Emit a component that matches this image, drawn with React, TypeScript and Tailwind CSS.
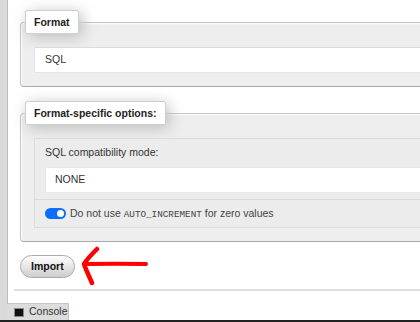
import React from "react";

const Fieldset: React.FC<{ legend: string; children: React.ReactNode; className?: string }> = ({
  legend,
  children,
  className = "",
}) => (
  <fieldset
    className={`w-[470px] rounded-[4px] border border-[#c6c6c6] border-b-[#a9a9a9] bg-[#eeeeee] shadow-[inset_1px_1px_2px_#fff] ${className}`}
  >
    <legend className="ml-[4px] h-[24px] px-[8px] bg-white border border-[#cfcfcf] rounded-[2px] shadow-[3px_3px_15px_#bbb] font-bold text-[10.5px] leading-[22px] text-[#222]">
      {legend}
    </legend>
    {children}
  </fieldset>
);

export default function App() {
  return (
    <div className="w-[420px] h-[322px] overflow-hidden bg-white flex flex-col font-['Liberation_Sans',Arial,sans-serif] text-[#333]">
      <div className="flex flex-1 min-h-0">
        <div className="w-[8px] shrink-0 bg-[#dadada] border-r border-[#bcbcbc]" />

        <main className="pl-[12px] pt-[10px] flex flex-col">
          <Fieldset legend="Format">
            <div className="pt-[13px] pb-[13px] pl-[13px]">
              <div className="h-[26px] w-[440px] bg-white border border-[#e6e6e6] border-t-[#dcdcdc] flex items-center pl-[10px] text-[10.5px] text-[#333]">
                SQL
              </div>
            </div>
          </Fieldset>

          <Fieldset legend="Format-specific options:" className="mt-[14px]">
            <div className="pt-[13px] pb-[13px] pl-[13px]">
              <div className="w-[440px] border border-[#dcdcdc] bg-[#ececec]">
                <div className="px-[10px] pt-[7px] pb-[6px]">
                  <p className="text-[10.5px] leading-[13px] text-[#333]">SQL compatibility mode:</p>
                  <div className="mt-[8px] h-[26px] bg-white border border-[#e8e8e8] flex items-center pl-[9px] text-[10.5px] text-[#333]">
                    NONE
                  </div>
                </div>
                <div className="h-[28px] border-t border-[#dadada] flex items-center pl-[10px] gap-[4px] text-[10.5px] text-[#444]">
                  <span className="w-[21px] h-[11px] rounded-full bg-[#0d6efd] flex items-center justify-end pr-[2px]">
                    <span className="w-[7px] h-[7px] rounded-full bg-white" />
                  </span>
                  <span>
                    Do not use{" "}
                    <code className="font-['Liberation_Mono','Courier_New',monospace] text-[9.3px]">
                      AUTO_INCREMENT
                    </code>{" "}
                    for zero values
                  </span>
                </div>
              </div>
            </div>
          </Fieldset>

          <div className="mt-[13px] flex items-center">
            <button
              type="button"
              className="h-[23px] px-[10px] rounded-full border border-[#aaa] bg-[linear-gradient(#fff,#cdcdcd)] font-bold text-[10.5px] text-[#111]"
            >
              Import
            </button>
            <svg className="ml-[5px] -my-[10px]" width="70" height="42" viewBox="0 0 70 42" fill="none">
              <path
                d="M17 3 C12 8 7 13 4 18 C6 24 9 30 12 37"
                stroke="#f00"
                strokeWidth="4.5"
                strokeLinecap="round"
                strokeLinejoin="round"
              />
              <path d="M5 18 C25 17.5 45 17.5 66 18" stroke="#f00" strokeWidth="4" strokeLinecap="round" />
            </svg>
          </div>

          <div className="mt-[11px] -ml-[6px] w-[420px] h-[2px] bg-[#dedede]" />
        </main>
      </div>

      <div className="h-[17px] flex shrink-0">
        <div className="w-[7px] bg-[#dadada]" />
        <div className="w-[62px] bg-[#dcdcdc] border-t border-r border-[#c4c4c4] flex items-center pl-[7px] gap-[5px] text-[10.5px] text-[#333]">
          <span className="w-[10px] h-[9px] bg-[#111] border border-[#888]" />
          Console
        </div>
      </div>
      <div className="h-[2px] bg-[#222] shrink-0" />
    </div>
  );
}
